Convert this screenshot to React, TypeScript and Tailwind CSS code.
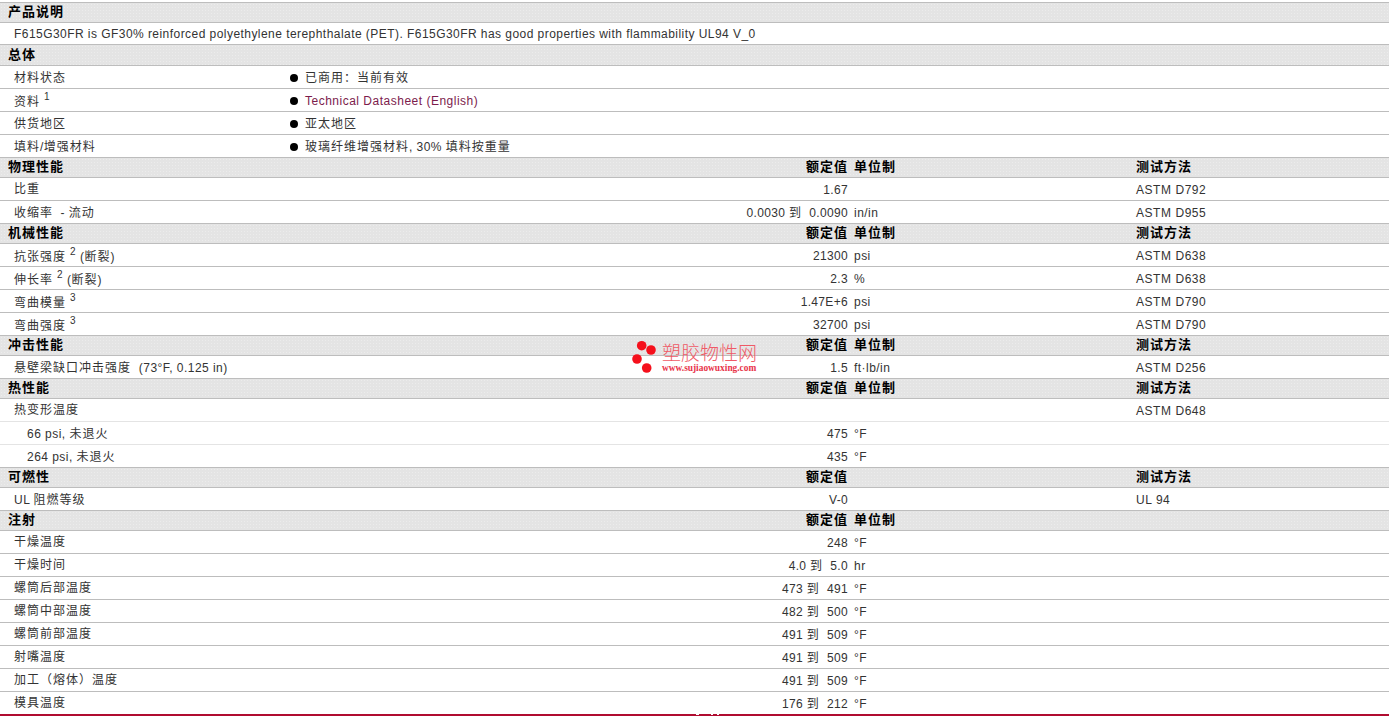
const fontStack = '"Liberation Sans", "Noto Sans CJK SC", Arial, sans-serif'

type Row =
  | { kind: 'head'; title: string; value?: boolean; unit?: boolean; test?: boolean; h?: string }
  | { kind: 'text'; text: string; h: string }
  | { kind: 'info'; label: string; sup?: string; item: string; link?: boolean }
  | { kind: 'data'; label: string; sup?: string; note?: string; value?: string; unit?: string; test?: string; indent?: boolean; light?: boolean }

const rows: Row[] = [
  { kind: 'head', title: '产品说明' },
  { kind: 'text', text: 'F615G30FR is GF30% reinforced polyethylene terephthalate (PET). F615G30FR has good properties with flammability UL94 V_0', h: 'h-[22px]' },
  { kind: 'head', title: '总体', h: 'h-[21px]' },
  { kind: 'info', label: '材料状态', item: '已商用：当前有效' },
  { kind: 'info', label: '资料', sup: '1', item: 'Technical Datasheet (English)', link: true },
  { kind: 'info', label: '供货地区', item: '亚太地区' },
  { kind: 'info', label: '填料/增强材料', item: '玻璃纤维增强材料, 30% 填料按重量' },
  { kind: 'head', title: '物理性能', value: true, unit: true, test: true },
  { kind: 'data', label: '比重', value: '1.67', test: 'ASTM D792' },
  { kind: 'data', label: '收缩率  - 流动', value: '0.0030 到  0.0090', unit: 'in/in', test: 'ASTM D955' },
  { kind: 'head', title: '机械性能', value: true, unit: true, test: true },
  { kind: 'data', label: '抗张强度', sup: '2', note: '(断裂)', value: '21300', unit: 'psi', test: 'ASTM D638' },
  { kind: 'data', label: '伸长率', sup: '2', note: '(断裂)', value: '2.3', unit: '%', test: 'ASTM D638' },
  { kind: 'data', label: '弯曲模量', sup: '3', value: '1.47E+6', unit: 'psi', test: 'ASTM D790' },
  { kind: 'data', label: '弯曲强度', sup: '3', value: '32700', unit: 'psi', test: 'ASTM D790' },
  { kind: 'head', title: '冲击性能', value: true, unit: true, test: true },
  { kind: 'data', label: '悬壁梁缺口冲击强度', note: ' (73°F, 0.125 in)', value: '1.5', unit: 'ft·lb/in', test: 'ASTM D256' },
  { kind: 'head', title: '热性能', value: true, unit: true, test: true },
  { kind: 'data', label: '热变形温度', test: 'ASTM D648', light: true },
  { kind: 'data', label: '66 psi, 未退火', value: '475', unit: '°F', indent: true, light: true },
  { kind: 'data', label: '264 psi, 未退火', value: '435', unit: '°F', indent: true },
  { kind: 'head', title: '可燃性', value: true, test: true },
  { kind: 'data', label: 'UL 阻燃等级', value: 'V-0', test: 'UL 94' },
  { kind: 'head', title: '注射', value: true, unit: true },
  { kind: 'data', label: '干燥温度', value: '248', unit: '°F' },
  { kind: 'data', label: '干燥时间', value: '4.0 到  5.0', unit: 'hr' },
  { kind: 'data', label: '螺筒后部温度', value: '473 到  491', unit: '°F' },
  { kind: 'data', label: '螺筒中部温度', value: '482 到  500', unit: '°F' },
  { kind: 'data', label: '螺筒前部温度', value: '491 到  509', unit: '°F' },
  { kind: 'data', label: '射嘴温度', value: '491 到  509', unit: '°F' },
  { kind: 'data', label: '加工（熔体）温度', value: '491 到  509', unit: '°F' },
  { kind: 'data', label: '模具温度', value: '176 到  212', unit: '°F' },
]

const gridCols = 'grid grid-cols-[284px_564px_288px_1fr] items-center'

// chinese glyphs sit on a 13px pitch in the picture, latin is tighter
function Txt({ children }: { children: string }) {
  const parts = children.split(/([\u3000-\u9fff\uff00-\uffef]+)/)
  return (
    <>
      {parts.map((part, i) =>
        i % 2 === 1 ? (
          <span key={i} className="tracking-[1px]">
            {part}
          </span>
        ) : (
          part
        ),
      )}
    </>
  )
}

function Sup({ n }: { n: string }) {
  return <sup className="relative -top-[6px] ml-1 text-[10px] leading-none">{n}</sup>
}

function labelShift(label: string, sup?: string, note?: string) {
  if (sup) return 'mt-0.5'
  if (!note && /^[\u3000-\u9fff\uff00-\uffef]+$/.test(label)) return 'mb-0.5'
  return ''
}

function RowView({ row }: { row: Row }) {
  if (row.kind === 'head') {
    return (
      <div
        className={`${gridCols} ${row.h ?? 'h-5'} border-b border-[#bdbdbd] bg-[#e4e4e4] bg-[radial-gradient(#ececec_0.5px,transparent_0.7px)] bg-[length:3px_3px] pb-px text-[13px] font-bold tracking-[1px] text-black`}
      >
        <div className="pl-2">{row.title}</div>
        <div className="text-right">{row.value ? '额定值' : ''}</div>
        <div className="pl-1.5">{row.unit ? '单位制' : ''}</div>
        <div>{row.test ? '测试方法' : ''}</div>
      </div>
    )
  }
  if (row.kind === 'text') {
    return <div className={`flex items-center ${row.h} border-b border-[#bdbdbd] pl-3.5 pt-px tracking-[0.45px]`}>{row.text}</div>
  }
  if (row.kind === 'info') {
    return (
      <div className={`${gridCols} h-[23px] border-b border-[#bdbdbd] pt-px`}>
        <div className={`pl-3.5 ${row.sup ? 'mt-0.5' : ''}`}>
          <Txt>{row.label}</Txt>
          {row.sup && <Sup n={row.sup} />}
        </div>
        <div className="col-span-3 flex items-center pl-1.5">
          <span className="mr-[7px] inline-block size-2 rounded-full bg-black" />
          <span className={row.link ? 'text-[#7c1c4c] tracking-[0.5px]' : ''}>
            <Txt>{row.item}</Txt>
          </span>
        </div>
      </div>
    )
  }
  return (
    <div className={`${gridCols} h-[23px] border-b pt-px ${row.light ? 'border-[#e4e4e4]' : 'border-[#bdbdbd]'}`}>
      <div className={`whitespace-pre ${row.indent ? 'pl-[27px]' : 'pl-3.5'} ${labelShift(row.label, row.sup, row.note)}`}>
        <Txt>{row.label}</Txt>
        {row.sup && <Sup n={row.sup} />}
        {row.note && (
          <span className="ml-1">
            <Txt>{row.note}</Txt>
          </span>
        )}
      </div>
      <div className="whitespace-pre text-right tracking-[0.33px]">{row.value && <Txt>{row.value}</Txt>}</div>
      <div className="pl-1.5">{row.unit}</div>
      <div className="tracking-[0.55px]">{row.test}</div>
    </div>
  )
}

function Watermark() {
  return (
    <div className="pointer-events-none absolute left-[632px] top-[340px] flex items-start tracking-normal">
      <svg width="30" height="34" viewBox="0 0 30 34" className="shrink-0">
        <circle cx="9.7" cy="5.7" r="4.8" fill="#f5101c" />
        <circle cx="19" cy="10" r="4.8" fill="#f5101c" />
        <circle cx="5" cy="19" r="4.8" fill="#f5101c" />
        <circle cx="14.7" cy="28" r="4.8" fill="#f5101c" />
      </svg>
      <div className="flex flex-col pt-[5px]">
        <span className="text-[19px] font-light leading-[18px] text-[#ef5a66]">塑胶物性网</span>
        <span className="font-['Liberation_Serif'] text-[9.4px] font-bold leading-[10px] text-[#e8344a]">www.sujiaowuxing.com</span>
      </div>
    </div>
  )
}

export default function App() {
  return (
    <div
      className="relative h-[716px] w-[1389px] overflow-hidden bg-white pt-0.5 text-xs tracking-[0.46px] text-[#333]"
      style={{ fontFamily: fontStack }}
    >
      <div className="border-t border-[#bdbdbd]">
        {rows.map((row, i) => (
          <RowView key={i} row={row} />
        ))}
      </div>
      <Watermark />
      <div className="absolute inset-x-0 bottom-0 flex h-0.5 items-start bg-[#b00c30] pl-[696px]">
        <span className="h-px w-[3px] bg-white" />
        <span className="ml-3 h-px w-[2px] bg-white" />
        <span className="ml-1 h-px w-[2px] bg-white" />
      </div>
    </div>
  )
}
